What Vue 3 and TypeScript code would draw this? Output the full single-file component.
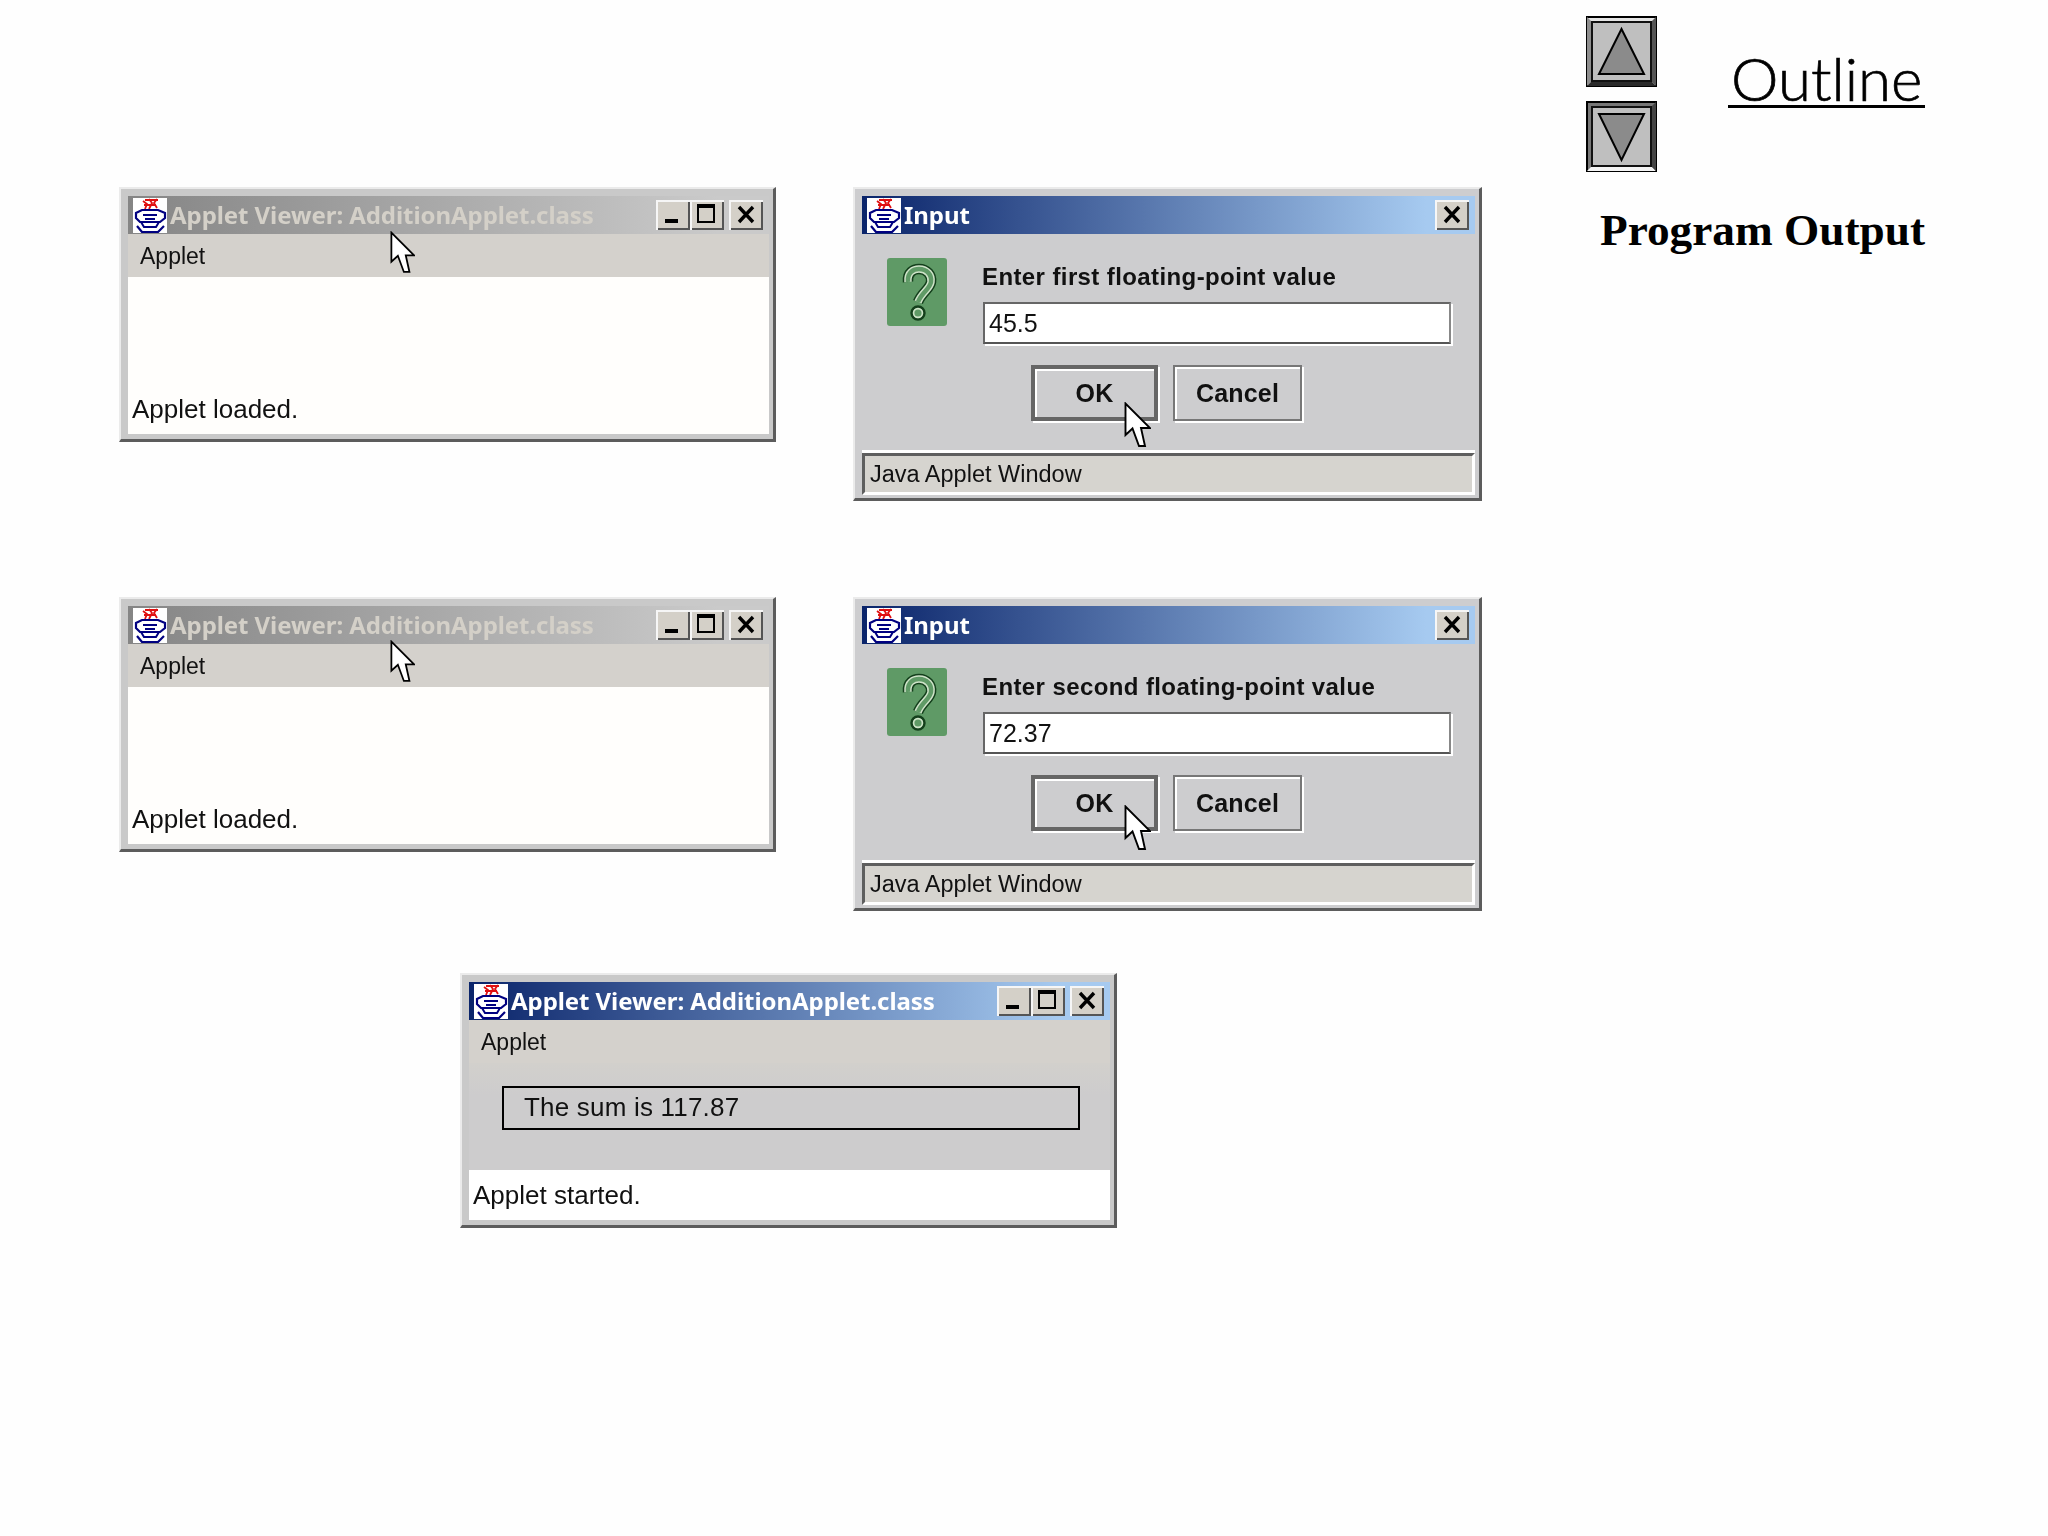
<script setup lang="ts">
interface SlideRow {
  value: string;
  label: string;
  viewerCursor: number;
  dialogCursor: number;
}

const rows: SlideRow[] = [
  { value: '45.5', label: 'Enter first floating-point value', viewerCursor: 42, dialogCursor: 213 },
  { value: '72.37', label: 'Enter second floating-point value', viewerCursor: 41, dialogCursor: 206 },
];
</script>

<template>
  <div class="slide">
    <svg class="defs" width="0" height="0" aria-hidden="true">
      <symbol id="java" viewBox="0 0 34 35">
        <rect width="34" height="35" fill="#fff" />
        <path d="M10 3l4 3-2 5M16 1l3 4-3 6M24 1l-3 4 3 5M12 2h13M11 7h12" fill="none" stroke="#e01010" stroke-width="1.8" />
        <path d="M9 12H25L32 15V20L27 24H7L3 20V15Z" fill="none" stroke="#000080" stroke-width="2.2" />
        <path d="M10 17H24M8 24L11 29H23L26 24M12 21H22" fill="none" stroke="#000080" stroke-width="2" />
        <path d="M4 28L9 34H25L31 28" fill="none" stroke="#000080" stroke-width="2.2" />
      </symbol>
      <symbol id="cursor" viewBox="0 0 27 46">
        <path d="M1.5 1.5V33L8.5 26.5L15 44H21L17 26H26Z" fill="#fff" stroke="#000" stroke-width="1.9" stroke-linejoin="miter" />
      </symbol>
      <symbol id="min" viewBox="0 0 34 30"><rect x="9" y="19" width="13" height="4" fill="#000" /></symbol>
      <symbol id="max" viewBox="0 0 34 30">
        <path d="M8 5H24V22H8Z" fill="none" stroke="#000" stroke-width="2" /><rect x="7" y="4" width="18" height="4" fill="#000" />
      </symbol>
      <symbol id="close" viewBox="0 0 34 30">
        <path d="M10 7L24 22M24 7L10 22" fill="none" stroke="#000" stroke-width="3.4" />
      </symbol>
    </svg>

    <main class="stage">
      <div v-for="row in rows" :key="row.value" class="row">
        <section class="window viewer">
          <header class="titlebar inactive">
            <svg class="app-icon"><use href="#java" /></svg>
            <span class="title-text">Applet Viewer: AdditionApplet.class</span>
            <div class="caption">
              <button class="cap"><svg><use href="#min" /></svg></button>
              <button class="cap"><svg><use href="#max" /></svg></button>
              <button class="cap close"><svg><use href="#close" /></svg></button>
            </div>
          </header>
          <div class="menu">Applet</div>
          <div class="applet-body">Applet loaded.</div>
          <svg class="cursor viewer-cursor" :style="{ top: row.viewerCursor + 'px' }"><use href="#cursor" /></svg>
        </section>

        <section class="window dialog">
          <header class="titlebar active">
            <svg class="app-icon"><use href="#java" /></svg>
            <span class="title-text">Input</span>
            <div class="caption">
              <button class="cap"><svg><use href="#close" /></svg></button>
            </div>
          </header>
          <div class="dialog-body">
            <svg class="question" viewBox="0 0 60 68">
              <rect width="60" height="68" rx="3" fill="#5f9a66" />
              <g fill="none">
                <path d="M21 24C20 14 27 11 32 11C40 11 45 17 44 24C43 31 35 34 31 44" stroke="#143f1c" stroke-width="10.5" />
                <path d="M21 24C20 14 27 11 32 11C40 11 45 17 44 24C43 31 35 34 31 44" stroke="#cfe3c9" stroke-width="7.5" />
                <path d="M21 24C20 14 27 11 32 11C40 11 45 17 44 24C43 31 35 34 31 44" stroke="#5f9a66" stroke-width="4.5" />
                <circle cx="31" cy="55" r="6.5" stroke="#143f1c" stroke-width="2.4" />
                <circle cx="31" cy="55" r="4.4" stroke="#cfe3c9" stroke-width="1.6" />
              </g>
            </svg>
            <div class="dialog-main">
              <div class="prompt">{{ row.label }}</div>
              <div class="field">{{ row.value }}</div>
              <div class="actions">
                <button class="action ok">OK</button>
                <button class="action cancel">Cancel</button>
              </div>
            </div>
          </div>
          <footer class="warning">Java Applet Window</footer>
          <svg class="cursor dialog-cursor" :style="{ top: row.dialogCursor + 'px' }"><use href="#cursor" /></svg>
        </section>
      </div>

      <section class="window viewer result">
        <header class="titlebar active">
          <svg class="app-icon"><use href="#java" /></svg>
          <span class="title-text">Applet Viewer: AdditionApplet.class</span>
          <div class="caption">
            <button class="cap"><svg><use href="#min" /></svg></button>
            <button class="cap"><svg><use href="#max" /></svg></button>
            <button class="cap close"><svg><use href="#close" /></svg></button>
          </div>
        </header>
        <div class="menu">Applet</div>
        <div class="result-body">
          <div class="sum">The sum is 117.87</div>
        </div>
        <div class="status">Applet started.</div>
      </section>
    </main>

    <aside class="side">
      <div class="side-top">
        <div class="nav-buttons">
          <svg class="nav" viewBox="0 0 71 71">
            <rect x="1" y="1" width="69" height="69" fill="#e4e4e4" stroke="#000" stroke-width="2" />
            <path d="M1 1L6 6V65L1 70Z" fill="#8e8e8e" />
            <path d="M70 1L65 6V65L70 70Z" fill="#555" />
            <path d="M1 70L6 65H65L70 70Z" fill="#2a2a2a" />
            <rect x="6" y="6" width="59" height="59" fill="#bfbfbf" stroke="#111" stroke-width="2" />
            <path d="M35.5 13L58 58H13Z" fill="#8b8b8b" stroke="#000" stroke-width="2" />
          </svg>
          <svg class="nav" viewBox="0 0 71 71">
            <rect x="1" y="1" width="69" height="69" fill="#777" stroke="#000" stroke-width="2" />
            <path d="M1 70L6 65H65L70 70Z" fill="#f4f4f4" />
            <path d="M70 1L65 6V65L70 70Z" fill="#444" />
            <rect x="6" y="6" width="59" height="59" fill="#bfbfbf" stroke="#111" stroke-width="2" />
            <path d="M13 13H58L35.5 59Z" fill="#8b8b8b" stroke="#000" stroke-width="2" />
          </svg>
        </div>
        <span class="outline">Outline</span>
      </div>
      <h1 class="side-title">Program Output</h1>
    </aside>
  </div>
</template>

<style>
body {
  background: #fefefe;
}
</style>

<style scoped>
.slide {
  display: flex;
  width: 2048px;
  height: 1536px;
  overflow: hidden;
  background: #fefefe;
  font-family: "Liberation Sans", Arial, sans-serif;
  color: #111;
}

.defs {
  position: absolute;
}

.stage {
  width: 1586px;
  flex-shrink: 0;
  box-sizing: border-box;
  padding: 187px 0 0 119px;
  display: flex;
  flex-direction: column;
}

.row {
  display: flex;
  align-items: flex-start;
  gap: 77px;
  margin-bottom: 96px;
}

.row:nth-child(2) {
  margin-bottom: 62px;
}

.window {
  position: relative;
  box-sizing: border-box;
  display: flex;
  flex-direction: column;
  border-style: solid;
  border-width: 2px 3px 3px 2px;
  border-color: #ebebeb #5c5c5c #5c5c5c #ebebeb;
  padding: 7px 4px 5px 7px;
  background: #c9c9c9;
  filter: blur(0.55px);
}

.viewer {
  width: 657px;
  height: 255px;
}

.dialog {
  width: 629px;
  height: 314px;
  padding-bottom: 3px;
  background: #cdcdcf;
}

.result {
  margin-left: 341px;
}

.titlebar {
  display: flex;
  align-items: center;
  flex: 0 0 38px;
  padding: 0 6px 0 5px;
  font-size: 24px;
  font-weight: 700;
  font-family: "Noto Sans", "Liberation Sans", sans-serif;
}

.titlebar.active {
  background: linear-gradient(90deg, #0a246a 0%, #a6caf0 92%);
  color: #fff;
}

.titlebar.inactive {
  background: linear-gradient(90deg, #858585 0%, #cacaca 92%);
  color: #d4d0c8;
}

.app-icon {
  width: 34px;
  height: 35px;
  flex-shrink: 0;
}

.title-text {
  margin-left: 3px;
  padding-bottom: 2px;
  letter-spacing: -0.07px;
  white-space: nowrap;
}

.caption {
  display: flex;
  margin-left: auto;
}

.cap {
  width: 34px;
  height: 30px;
  padding: 0;
  border: 0;
  background: #d4d0c8;
  box-shadow: inset 2px 2px 0 #f6f6f6, inset -2px -2px 0 #555;
}

.cap svg {
  display: block;
  width: 34px;
  height: 30px;
}

.cap.close {
  margin-left: 5px;
}

.menu {
  flex: 0 0 43px;
  display: flex;
  align-items: center;
  padding: 2px 0 0 12px;
  box-sizing: border-box;
  background: #d4d1cc;
  font-size: 23px;
}

.applet-body {
  flex: 1;
  display: flex;
  align-items: flex-end;
  padding: 0 0 10px 4px;
  background: #fffefc;
  font-size: 26px;
  line-height: 30px;
}

.cursor {
  position: absolute;
  width: 27px;
  height: 46px;
}

.viewer-cursor {
  left: 269px;
  width: 25px;
  height: 43px;
}

.dialog-cursor {
  left: 269px;
}

.dialog-body {
  flex: 1;
  display: flex;
  align-items: flex-start;
  padding: 24px 0 0 25px;
}

.question {
  width: 60px;
  height: 68px;
  flex-shrink: 0;
}

.dialog-main {
  margin: 4px 0 0 35px;
}

.prompt {
  font-size: 24px;
  font-weight: 700;
  letter-spacing: 0.4px;
  line-height: 30px;
  white-space: nowrap;
}

.field {
  box-sizing: border-box;
  width: 468px;
  height: 42px;
  margin: 10px 0 0 1px;
  padding-left: 4px;
  background: #fff;
  border-style: solid;
  border-width: 2px;
  border-color: #666 #888 #555 #666;
  box-shadow: 2px 2px 0 #fff;
  font-size: 25px;
  line-height: 38px;
}

.actions {
  display: flex;
  gap: 15px;
  margin: 21px 0 0 49px;
}

.action {
  box-sizing: border-box;
  width: 129px;
  height: 56px;
  padding: 0;
  background: #cdcdcf;
  border: 2px solid #777;
  box-shadow: inset 2px 2px 0 #fff, 2px 2px 0 #fff;
  font-family: "Liberation Sans", Arial, sans-serif;
  font-size: 25px;
  font-weight: 700;
  letter-spacing: 0.2px;
  color: #111;
}

.action.ok {
  width: 127px;
  border-width: 4px;
  border-color: #666;
}

.warning {
  flex: 0 0 42px;
  box-sizing: border-box;
  display: flex;
  align-items: center;
  padding-left: 5px;
  border-style: solid;
  border-width: 3px;
  border-color: #5e5e5e #fff #fff #5e5e5e;
  box-shadow: 0 -3px 0 #fff;
  background: #d6d4cf;
  font-size: 23.5px;
}

.result-body {
  flex: 1;
  padding: 23px 0 0 33px;
  background: linear-gradient(180deg, #d2d0cc 0%, #cdcccd 30%);
}

.sum {
  box-sizing: border-box;
  width: 578px;
  height: 44px;
  padding-left: 20px;
  border: 2px solid #000;
  font-size: 26px;
  letter-spacing: 0.2px;
  line-height: 39px;
}

.status {
  flex: 0 0 50px;
  display: flex;
  align-items: center;
  padding-left: 4px;
  background: #fff;
  font-size: 26px;
}

.side {
  box-sizing: border-box;
  width: 338px;
  padding-top: 16px;
}

.side-top {
  display: flex;
  align-items: flex-start;
}

.nav-buttons {
  display: flex;
  flex-direction: column;
  gap: 14px;
}

.nav {
  display: block;
  width: 71px;
  height: 71px;
}

.outline {
  margin: 35px 0 0 71px;
  padding: 0 3px;
  border-bottom: 3px solid #000;
  font-family: Lato, "Liberation Sans", sans-serif;
  font-size: 60px;
  font-weight: 300;
  -webkit-text-stroke: 0.7px #000;
  color: #000;
  line-height: 54px;
}

.side-title {
  margin: 31px 0 0 14px;
  font-family: "Liberation Serif", "Times New Roman", serif;
  font-size: 45.3px;
  font-weight: 700;
  line-height: 54px;
  white-space: nowrap;
  color: #000;
}
</style>
